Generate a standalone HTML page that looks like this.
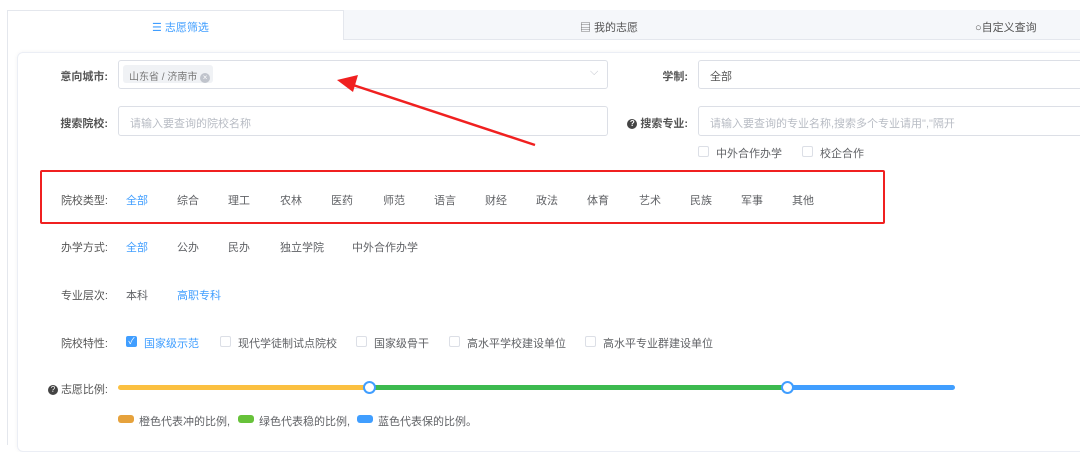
<!DOCTYPE html>
<html><head><meta charset="utf-8"><style>
*{margin:0;padding:0;box-sizing:border-box}
body{width:1080px;height:445px;background:#fff;font-family:"Liberation Sans","Noto Sans CJK SC",sans-serif;font-size:11px;color:#606266;position:relative;overflow:hidden}
.a{position:absolute;white-space:nowrap}
.lbl{position:absolute;color:#555;font-weight:bold;text-align:right;width:100px}
.inp{position:absolute;border:1px solid #dcdfe6;border-radius:3px;background:#fff}
.ph{color:#b8bcc4}
.cb{position:absolute;width:11px;height:11px;border:1px solid #dcdfe6;border-radius:2px;background:#fff}
.blue{color:#409eff}
.q{display:inline-block;width:10px;height:10px;border-radius:50%;background:#444;color:#fff;font-size:8px;line-height:10px;text-align:center;vertical-align:1px;margin-right:3px}
</style></head><body>
<div class="a" style="left:7px;top:10px;width:1073px;height:435px;border:1px solid #e4e7ed;border-right:none;border-bottom:none"></div>
<div class="a" style="left:343px;top:10px;width:737px;height:30px;background:#f5f7fa;border-left:1px solid #e4e7ed;border-bottom:1px solid #e4e7ed"></div>
<div class="a blue" style="left:152px;top:19px">☰ 志愿筛选</div>
<div class="a" style="left:580px;top:19px;color:#555">▤ 我的志愿</div>
<div class="a" style="left:975px;top:19px;color:#555">○自定义查询</div>
<div class="a" style="left:17px;top:52px;width:1070px;height:400px;border:1px solid #ebeef5;border-radius:6px;box-shadow:0 0 4px rgba(0,0,0,.05)"></div>

<div class="lbl" style="left:8px;top:68px">意向城市:</div>
<div class="inp" style="left:118px;top:60px;width:490px;height:29px"></div>
<div class="a" style="left:123px;top:65px;width:90px;height:18px;background:#f0f2f5;border-radius:3px;color:#777;font-size:10px;padding:3px 0 0 6px">山东省 / 济南市 <span style="display:inline-block;width:10px;height:10px;border-radius:50%;background:#c0c4cc;color:#fff;font-size:8px;line-height:10px;text-align:center">×</span></div>
<div class="a" style="left:590px;top:66px;color:#c0c4cc">⌵</div>

<div class="lbl" style="left:8px;top:115px">搜索院校:</div>
<div class="inp" style="left:118px;top:106px;width:490px;height:30px"></div>
<div class="a ph" style="left:130px;top:115px">请输入要查询的院校名称</div>

<div class="lbl" style="left:588px;top:68px">学制:</div>
<div class="inp" style="left:698px;top:60px;width:390px;height:29px"></div>
<div class="a" style="left:710px;top:68px;color:#555">全部</div>
<div class="lbl" style="left:588px;top:115px"><span class="q">?</span>搜索专业:</div>
<div class="inp" style="left:698px;top:106px;width:390px;height:30px"></div>
<div class="a ph" style="left:710px;top:115px">请输入要查询的专业名称,搜索多个专业请用","隔开</div>
<div class="cb" style="left:698px;top:146px"></div><div class="a" style="left:716px;top:145px">中外合作办学</div>
<div class="cb" style="left:802px;top:146px"></div><div class="a" style="left:820px;top:145px">校企合作</div>

<div class="a" style="left:40px;top:170px;width:845px;height:54px;border:2px solid #f02020;border-radius:2px"></div>
<div class="lbl" style="left:8px;top:192px;font-weight:normal;color:#555">院校类型:</div>
<div class="a blue" style="left:126px;top:192px">全部</div>
<div class="a" style="left:177px;top:192px">综合</div><div class="a" style="left:228px;top:192px">理工</div><div class="a" style="left:280px;top:192px">农林</div><div class="a" style="left:331px;top:192px">医药</div><div class="a" style="left:383px;top:192px">师范</div><div class="a" style="left:434px;top:192px">语言</div><div class="a" style="left:485px;top:192px">财经</div><div class="a" style="left:536px;top:192px">政法</div><div class="a" style="left:587px;top:192px">体育</div><div class="a" style="left:639px;top:192px">艺术</div><div class="a" style="left:690px;top:192px">民族</div><div class="a" style="left:741px;top:192px">军事</div><div class="a" style="left:792px;top:192px">其他</div>

<div class="lbl" style="left:8px;top:239px;font-weight:normal;color:#555">办学方式:</div>
<div class="a blue" style="left:126px;top:239px">全部</div><div class="a" style="left:177px;top:239px">公办</div><div class="a" style="left:228px;top:239px">民办</div><div class="a" style="left:280px;top:239px">独立学院</div><div class="a" style="left:352px;top:239px">中外合作办学</div>

<div class="lbl" style="left:8px;top:287px;font-weight:normal;color:#555">专业层次:</div>
<div class="a" style="left:126px;top:287px">本科</div><div class="a blue" style="left:177px;top:287px">高职专科</div>

<div class="lbl" style="left:8px;top:335px;font-weight:normal;color:#555">院校特性:</div>
<div class="cb" style="left:126px;top:336px;background:#409eff;border-color:#409eff;color:#fff;font-size:9px;line-height:9px;text-align:center">✓</div><div class="a blue" style="left:144px;top:335px">国家级示范</div>
<div class="cb" style="left:220px;top:336px"></div><div class="a" style="left:238px;top:335px">现代学徒制试点院校</div>
<div class="cb" style="left:356px;top:336px"></div><div class="a" style="left:374px;top:335px">国家级骨干</div>
<div class="cb" style="left:449px;top:336px"></div><div class="a" style="left:467px;top:335px">高水平学校建设单位</div>
<div class="cb" style="left:585px;top:336px"></div><div class="a" style="left:603px;top:335px">高水平专业群建设单位</div>

<div class="lbl" style="left:8px;top:381px;font-weight:normal;color:#555"><span class="q">?</span>志愿比例:</div>
<div class="a" style="left:118px;top:385px;width:251px;height:5px;background:#fbc040;border-radius:3px 0 0 3px"></div>
<div class="a" style="left:369px;top:385px;width:418px;height:5px;background:#3cba4f"></div>
<div class="a" style="left:787px;top:385px;width:168px;height:5px;background:#409eff;border-radius:0 3px 3px 0"></div>
<div class="a" style="left:363px;top:381px;width:13px;height:13px;border-radius:50%;background:#fff;border:2px solid #409eff"></div>
<div class="a" style="left:781px;top:381px;width:13px;height:13px;border-radius:50%;background:#fff;border:2px solid #409eff"></div>

<div class="a" style="left:118px;top:415px;width:16px;height:8px;background:#e6a23c;border-radius:3px"></div><div class="a" style="left:139px;top:413px">橙色代表冲的比例,</div>
<div class="a" style="left:238px;top:415px;width:16px;height:8px;background:#67c23a;border-radius:3px"></div><div class="a" style="left:259px;top:413px">绿色代表稳的比例,</div>
<div class="a" style="left:357px;top:415px;width:16px;height:8px;background:#409eff;border-radius:3px"></div><div class="a" style="left:378px;top:413px">蓝色代表保的比例。</div>

<svg class="a" style="left:0;top:0" width="1080" height="445"><line x1="535" y1="145" x2="350" y2="84" stroke="#f02020" stroke-width="2.5"/><polygon points="337,80 358,75 353,92" fill="#f02020"/></svg>
</body></html>
